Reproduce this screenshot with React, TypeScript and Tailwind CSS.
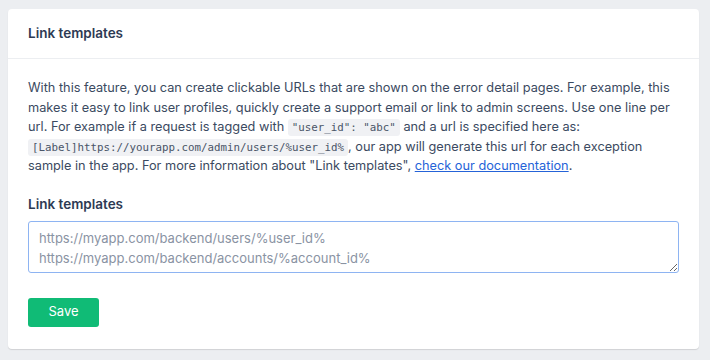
import React from 'react';

const Code: React.FC<{ children: React.ReactNode }> = ({ children }) => (
  <code className="inline-block rounded-[3px] bg-[#f0f1f4] px-[4px] font-['DejaVu_Sans_Mono',monospace] text-[10.8px] leading-[17px] text-[#4a5568]">
    {children}
  </code>
);

const App: React.FC = () => {
  return (
    <div className="min-h-[360px] w-[710px] bg-[#eceef1] pt-[9px] pl-[8px] pr-[11px] font-['Inter',sans-serif] text-[#3b4a61]">
      <div className="rounded-[4px] bg-white shadow-[0_1px_1px_rgba(0,0,0,0.12)]">
        <div className="border-b border-[#eceef1] px-[20px] py-[16px]">
          <h2 className="text-[13.5px] leading-[17px] font-semibold text-[#2d3a53]">Link templates</h2>
        </div>
        <div className="px-[20px] pt-[19px] pb-[22px]">
          <p className="text-[12.75px] leading-[19.5px]">
            With this feature, you can create clickable URLs that are shown on the error detail pages. For example, this
            makes it easy to link user profiles, quickly create a support email or link to admin screens. Use one line per
            url. For example if a request is tagged with <Code>"user_id": "abc"</Code> and a url is specified here as:{' '}
            <Code>[Label]https://yourapp.com/admin/users/%user_id%</Code>, our app will generate this url for each exception
            sample in the app. For more information about "Link templates",{' '}
            <a href="#" className="text-[#2563d8] underline">
              check our documentation
            </a>
            .
          </p>
          <label className="mt-[19px] block text-[13.5px] leading-[18px] font-semibold text-[#2d3a53]">Link templates</label>
          <textarea
            className="mt-[8px] block h-[52px] w-full rounded-[3px] border border-[#8eb4f2] px-[10px] pt-[6px] text-[13px] leading-[20px] text-[#3b4a61] placeholder:text-[#8a93a3] outline-none"
            placeholder={'https://myapp.com/backend/users/%user_id%\nhttps://myapp.com/backend/accounts/%account_id%'}
          />
          <button className="mt-[25px] h-[29px] w-[71px] rounded-[3px] bg-[#10bb76] text-[13px] text-white">
            Save
          </button>
        </div>
      </div>
    </div>
  );
};

export default App;
